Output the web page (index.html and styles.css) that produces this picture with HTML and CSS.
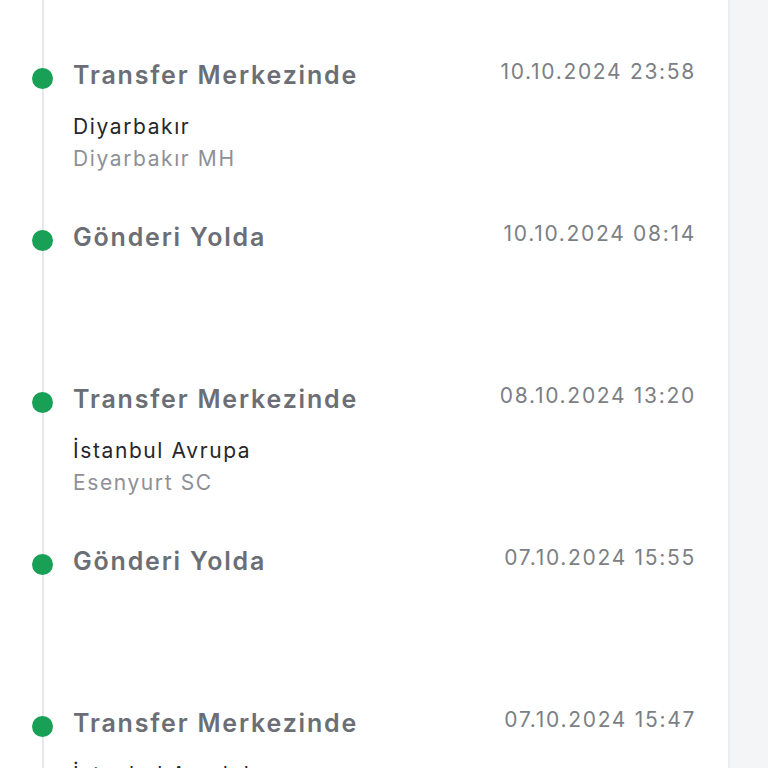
FILE: index.html
```html
<!DOCTYPE html>
<html lang="tr">
<head>
    <meta charset="UTF-8">
    <meta name="viewport" content="width=device-width, initial-scale=1.0">
    <title>Gönderi Hareketleri</title>
    <link rel="stylesheet" href="styles.css">
</head>
<body>
    <div class="page">
        <section class="panel">
            <ul class="timeline">
                <li class="step">
                    <span class="dot"></span>
                    <div class="step-head">
                        <h3 class="step-title">Transfer Merkezinde</h3>
                        <span class="step-date">10.10.2024 23:58</span>
                    </div>
                    <p class="step-city">Diyarbakır</p>
                    <p class="step-branch">Diyarbakır MH</p>
                </li>
                <li class="step">
                    <span class="dot"></span>
                    <div class="step-head">
                        <h3 class="step-title">Gönderi Yolda</h3>
                        <span class="step-date">10.10.2024 08:14</span>
                    </div>
                </li>
                <li class="step">
                    <span class="dot"></span>
                    <div class="step-head">
                        <h3 class="step-title">Transfer Merkezinde</h3>
                        <span class="step-date">08.10.2024 13:20</span>
                    </div>
                    <p class="step-city">İstanbul Avrupa</p>
                    <p class="step-branch">Esenyurt SC</p>
                </li>
                <li class="step">
                    <span class="dot"></span>
                    <div class="step-head">
                        <h3 class="step-title">Gönderi Yolda</h3>
                        <span class="step-date">07.10.2024 15:55</span>
                    </div>
                </li>
                <li class="step">
                    <span class="dot"></span>
                    <div class="step-head">
                        <h3 class="step-title">Transfer Merkezinde</h3>
                        <span class="step-date">07.10.2024 15:47</span>
                    </div>
                    <p class="step-city">İstanbul Anadolu</p>
                    <p class="step-branch">Tuzla SC</p>
                </li>
            </ul>
        </section>
        <aside class="side"></aside>
    </div>
</body>
</html>
```

FILE: styles.css
```css
/* General */
body, html {
    margin: 0;
    padding: 0;
    height: 100%;
    overflow: hidden;
}

body {
    font-family: Inter, "Noto Sans", sans-serif;
    background-color: #f4f5f7;
    color: #222;
}

.page {
    display: flex;
    height: 100%;
}

/* Panel */
.panel {
    width: 730px;
    flex-shrink: 0;
    background-color: #fff;
    border-right: 2px solid #eceef1;
    padding: 0 32px 0 42px;
    box-sizing: border-box;
}

.side {
    flex: 1;
}

/* Timeline */
.timeline {
    list-style: none;
    margin: 0;
    padding: 57px 0 0 29px;
    border-left: 2px solid #e6e7ea;
}

.step {
    position: relative;
    height: 162px;
}

.dot {
    position: absolute;
    left: -41px;
    top: 11px;
    width: 21px;
    height: 21px;
    border-radius: 50%;
    background-color: #17a056;
}

.step-head {
    display: flex;
    justify-content: space-between;
    align-items: flex-start;
}

.step-title {
    margin: 0;
    font-size: 25px;
    line-height: 36px;
    font-weight: 600;
    letter-spacing: 1.8px;
    color: #6b6e74;
}

.step-date {
    font-size: 21px;
    line-height: 30px;
    letter-spacing: 1.7px;
    color: #7c7f85;
}

.step-city,
.step-branch {
    margin: 0;
    font-size: 21px;
    line-height: 32px;
    letter-spacing: 1.6px;
}

.step-city {
    margin-top: 18px;
    color: #26272b;
}

.step-branch {
    color: #8e9096;
}
```
